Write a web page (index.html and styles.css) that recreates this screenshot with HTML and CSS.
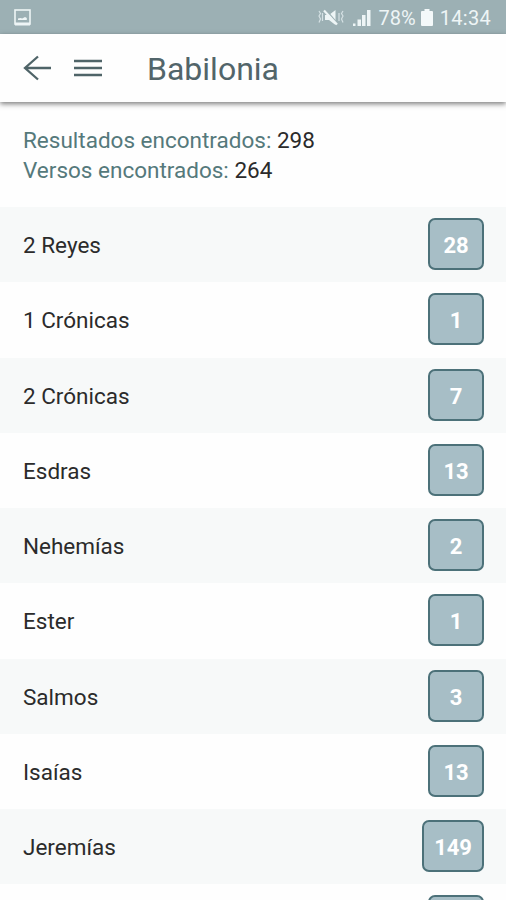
FILE: index.html
```html
<!DOCTYPE html>
<html lang="es">
<head>
  <meta charset="UTF-8" />
  <meta name="viewport" content="width=device-width, initial-scale=1" />
  <title>Babilonia</title>
  <link rel="stylesheet" href="styles.css">
</head>
<body>

<div class="status-bar">
  <svg class="icon-picture" width="17" height="17" viewBox="0 0 17 17">
    <rect x="1" y="1" width="15" height="14" fill="none" stroke="#eef5f6" stroke-width="1.6" />
    <path d="M1 15h15" stroke="#eef5f6" stroke-width="3" />
    <path d="M4 11V9.500l2.500-.5 1.700.5L11 8l1.800 1v2z" fill="#eef5f6" />
  </svg>
  <div class="status-right">
    <svg class="icon-mute" width="26" height="17" viewBox="0 0 26 17">
      <path d="M7 6h4l6.500-5v15L11 11H7z" fill="#eef5f6" />
      <path d="M7.500 0.500l12 14" stroke="#9cb0b4" stroke-width="1.500" />
      <path d="M6 1.500l13 14" stroke="#eef5f6" stroke-width="2.200" />
      <path d="M1 2l1.500 2.500L1 7l1.500 3L1 13.500M4.500 4v8M25 2l-1.500 2.500L25 7l-1.500 3 1.500 3.500M21 4v8" fill="none" stroke="#d5e1e4" stroke-width="1.200" />
    </svg>
    <svg class="icon-signal" width="18" height="17" viewBox="0 0 18 17">
      <path d="M0 14.500h2.500V17H0zM4.500 10.500h3.500V17H4.500zM9 6h3.500v11H9zM14 1h3.500v16H14z" fill="#eef5f6" />
    </svg>
    <span class="battery">78%</span>
    <svg class="icon-battery" width="12" height="17" viewBox="0 0 12 17">
      <path d="M3.500 0h5v2H11a1 1 0 0 1 1 1v13a1 1 0 0 1-1 1H1a1 1 0 0 1-1-1V3a1 1 0 0 1 1-1h2.500z" fill="#f4f9fa" />
    </svg>
    <span class="clock">14:34</span>
  </div>
</div>

<header class="toolbar">
  <svg class="icon-back" width="28" height="26" viewBox="0 0 28 26">
    <path d="M28 13H2M15 1.500L2 13l13 11.500" fill="none" stroke="#4f6468" stroke-width="2.300" />
  </svg>
  <svg class="icon-menu" width="28" height="18" viewBox="0 0 28 18">
    <path d="M0 2h28M0 9h28M0 16h28" stroke="#4f6468" stroke-width="2.300" />
  </svg>
  <h1>Babilonia</h1>
</header>

<div class="summary">
  <p>Resultados encontrados: <span>298</span></p>
  <p>Versos encontrados: <span>264</span></p>
</div>

<ul class="books">
  <li><span class="name">2 Reyes</span> <span class="count">28</span></li>
  <li><span class="name">1 Crónicas</span> <span class="count">1</span></li>
  <li><span class="name">2 Crónicas</span> <span class="count">7</span></li>
  <li><span class="name">Esdras</span> <span class="count">13</span></li>
  <li><span class="name">Nehemías</span> <span class="count">2</span></li>
  <li><span class="name">Ester</span> <span class="count">1</span></li>
  <li><span class="name">Salmos</span> <span class="count">3</span></li>
  <li><span class="name">Isaías</span> <span class="count">13</span></li>
  <li><span class="name">Jeremías</span> <span class="count">149</span></li>
  <li><span class="count"></span></li>
</ul>

</body>
</html>
```
FILE: styles.css
```css
* {
  box-sizing: border-box;
}
html {
  overflow: hidden;
}
body {
  margin: 0;
  height: 900px;
  overflow: hidden;
  background-color: #fefefe;
  color: #2b2b2b;
  font-family: Roboto, sans-serif;
  font-size: 22.5px;
}
.status-bar {
  display: flex;
  justify-content: space-between;
  height: 34px;
  padding: 9px 15px 0 14px;
  background-color: #9cb0b4;
  color: #eef5f6;
}
.status-right {
  display: flex;
  font-size: 20px;
  line-height: 18px;
}
.icon-signal {
  margin-left: 9px;
}
.battery {
  margin-left: 8px;
}
.icon-battery {
  margin-left: 5px;
}
.clock {
  margin-left: 7px;
  letter-spacing: 0.3px;
}
.toolbar {
  display: flex;
  align-items: center;
  height: 68px;
  padding-left: 23px;
  background-color: #fefefe;
  box-shadow: 0 2px 5px rgba(0, 0, 0, 0.5);
}
.icon-menu {
  margin-left: 23px;
}
.toolbar h1 {
  margin: 1px 0 0 45px;
  color: #52656a;
  font-size: 32px;
  font-weight: 400;
}
.summary {
  height: 105px;
  padding: 23px 23px 0;
  color: #55797b;
}
.summary p {
  margin: 0;
  line-height: 30px;
}
.summary span {
  color: #2b2b2b;
}
.books {
  height: 693px;
  margin: 0;
  padding: 0;
  overflow: hidden;
  list-style: none;
}
.books li {
  display: flex;
  align-items: center;
  justify-content: space-between;
  height: 75.25px;
  padding: 0 22px 1px 23px;
}
.books li:nth-child(odd) {
  background-color: #f7f9f9;
}
.name {
  padding-top: 2px;
}
.count {
  min-width: 56px;
  height: 52px;
  margin-left: auto;
  padding: 0 10px;
  border: 2px solid #4c7179;
  border-radius: 7px;
  background-color: #a7bec6;
  color: #fff;
  font-size: 22px;
  font-weight: 700;
  line-height: 51px;
  text-align: center;
}
```
